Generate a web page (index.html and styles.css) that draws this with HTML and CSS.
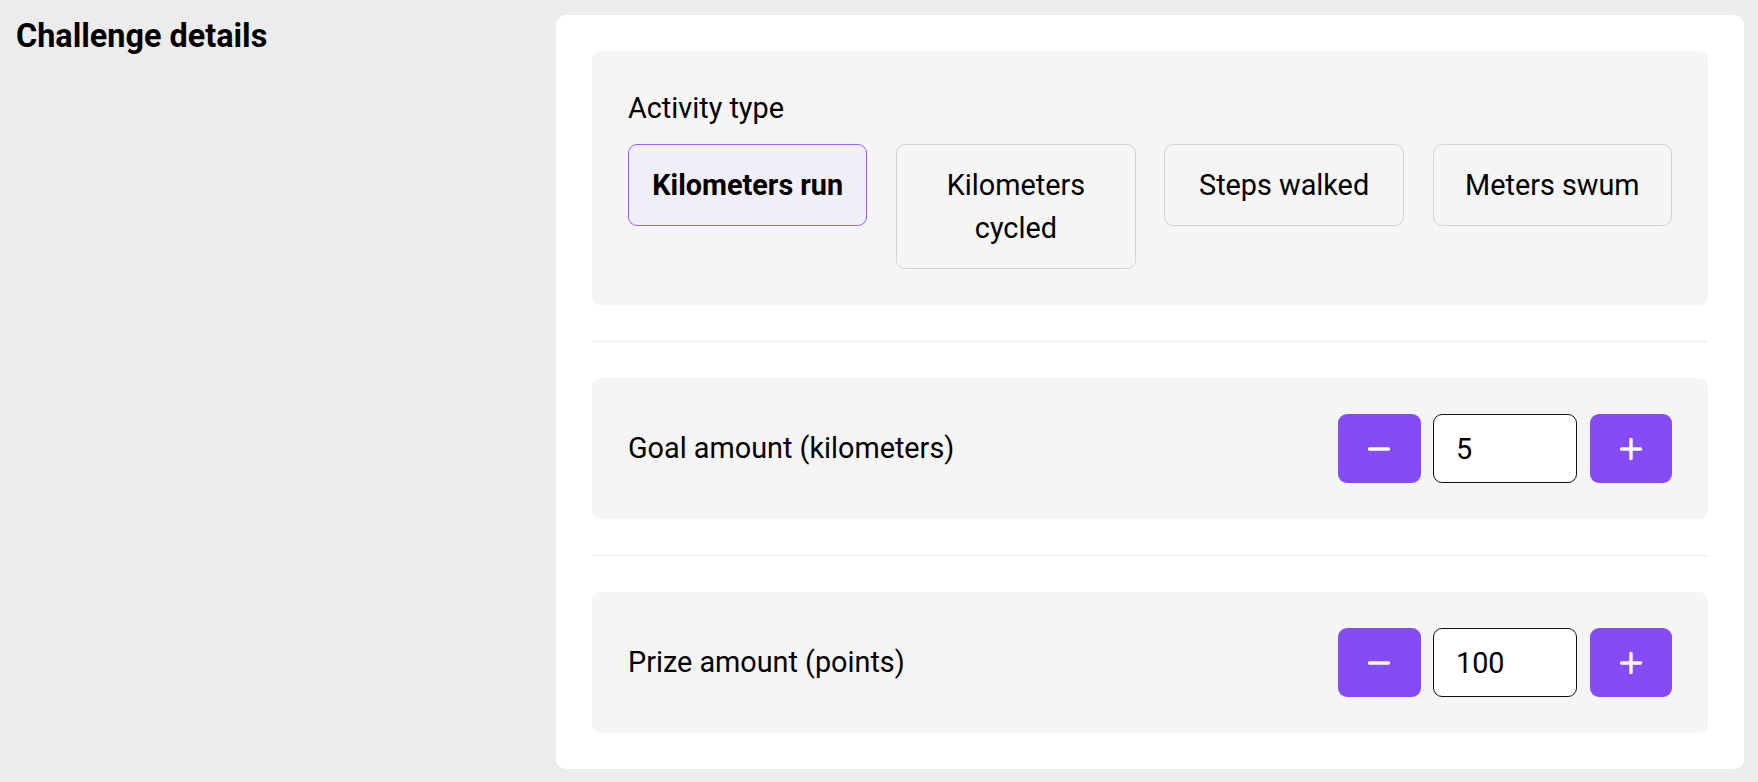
FILE: index.html
```html
<!DOCTYPE html>
<html lang="en">
<head>
<meta charset="utf-8">
<title>Challenge details</title>
<link rel="stylesheet" href="styles.css">
</head>
<body>
<div class="page">
  <h2 class="section-title">Challenge details</h2>
  <div class="card">
    <div class="panel">
      <div class="field-label">Activity type</div>
      <div class="options">
        <button class="option selected">Kilometers run</button>
        <button class="option">Kilometers cycled</button>
        <button class="option">Steps walked</button>
        <button class="option">Meters swum</button>
      </div>
    </div>
    <hr class="divider">
    <div class="panel panel-row">
      <div class="field-label">Goal amount (kilometers)</div>
      <div class="stepper">
        <button class="step-btn step-minus" aria-label="Decrease"><svg viewBox="0 0 24 24" width="24" height="24"><line x1="2.5" y1="12" x2="21.5" y2="12" stroke="#fff" stroke-width="3.4" stroke-linecap="round"/></svg></button>
        <input class="step-input" type="text" value="5">
        <button class="step-btn step-plus" aria-label="Increase"><svg viewBox="0 0 24 24" width="24" height="24"><line x1="2.5" y1="12" x2="21.5" y2="12" stroke="#fff" stroke-width="3.4" stroke-linecap="round"/><line x1="12" y1="2.5" x2="12" y2="21.5" stroke="#fff" stroke-width="3.4" stroke-linecap="round"/></svg></button>
      </div>
    </div>
    <hr class="divider">
    <div class="panel panel-row">
      <div class="field-label">Prize amount (points)</div>
      <div class="stepper">
        <button class="step-btn step-minus" aria-label="Decrease"><svg viewBox="0 0 24 24" width="24" height="24"><line x1="2.5" y1="12" x2="21.5" y2="12" stroke="#fff" stroke-width="3.4" stroke-linecap="round"/></svg></button>
        <input class="step-input" type="text" value="100">
        <button class="step-btn step-plus" aria-label="Increase"><svg viewBox="0 0 24 24" width="24" height="24"><line x1="2.5" y1="12" x2="21.5" y2="12" stroke="#fff" stroke-width="3.4" stroke-linecap="round"/><line x1="12" y1="2.5" x2="12" y2="21.5" stroke="#fff" stroke-width="3.4" stroke-linecap="round"/></svg></button>
      </div>
    </div>
  </div>
</div>
</body>
</html>
```

FILE: styles.css
```css
* { box-sizing: border-box; }

html, body {
  margin: 0;
  padding: 0;
  background: #ececec;
  font-family: Roboto, "Liberation Sans", Arial, sans-serif;
  color: #000;
}

.page {
  display: grid;
  grid-template-columns: 540px 1fr;
  align-items: start;
  padding: 15px 14px 0 16px;
}

.section-title {
  margin: 2px 0 0 0;
  font-size: 32.4px;
  line-height: 1.2;
  font-weight: 700;
}

.card {
  background: #fff;
  border-radius: 10px;
  padding: 36px;
  display: flex;
  flex-direction: column;
}

.panel {
  background: #f5f5f5;
  border-radius: 9px;
  padding: 36px;
}

.panel-row {
  display: flex;
  align-items: center;
  justify-content: space-between;
}

.field-label {
  font-size: 28.8px;
  line-height: 43.2px;
}

.options {
  margin-top: 14px;
  display: grid;
  grid-template-columns: repeat(4, 1fr);
  gap: 28.8px;
  align-items: start;
}

.option {
  font-family: Roboto, "Liberation Sans", Arial, sans-serif;
  font-size: 28.8px;
  line-height: 43px;
  color: #000;
  background: #f5f5f5;
  border: 1px solid #d4d4d4;
  border-radius: 9px;
  padding: 18.5px 18px;
  text-align: center;
  cursor: pointer;
}

.option.selected {
  background: #f0eef6;
  border-color: #9466f6;
  font-weight: 700;
}

.divider {
  border: 0;
  height: 1px;
  background: #ebebeb;
  margin: 36px 0;
}

.stepper {
  display: flex;
  align-items: center;
  gap: 12.6px;
}

.step-btn {
  width: 83px;
  height: 69px;
  background: #854cf5;
  border: 0;
  border-radius: 9px;
  display: flex;
  align-items: center;
  justify-content: center;
  padding: 0;
  cursor: pointer;
}

.step-plus { width: 82px; }

.step-input {
  width: 144px;
  height: 69px;
  border: 1px solid #111;
  border-radius: 9px;
  background: #fff;
  font-family: Roboto, "Liberation Sans", Arial, sans-serif;
  font-size: 28.8px;
  color: #000;
  padding: 0 21.6px;
  outline: none;
}
```
